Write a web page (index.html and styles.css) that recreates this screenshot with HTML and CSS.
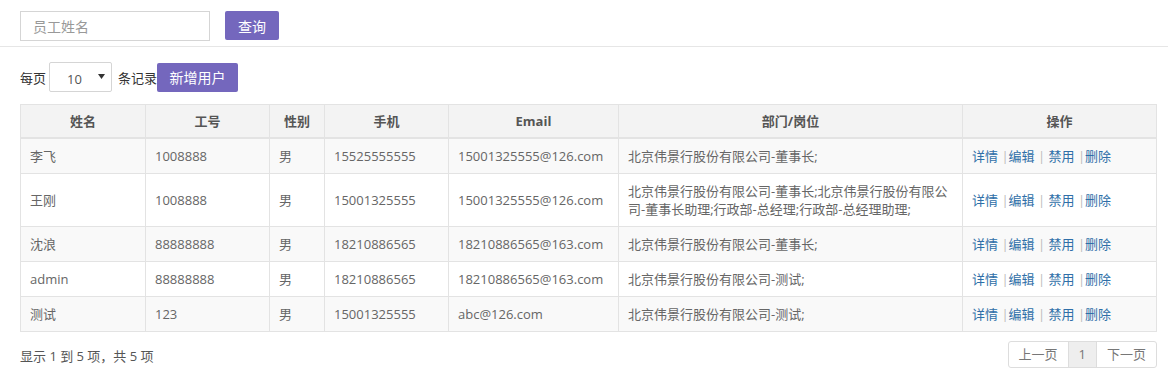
FILE: index.html
```html
<!DOCTYPE html>
<html lang="zh-CN">
<head>
    <meta charset="UTF-8">
    <title>员工管理</title>
    <link rel="stylesheet" href="styles.css">
</head>
<body>
    <!-- 查询栏 -->
    <div class="search-bar">
        <input type="text" class="search-input" placeholder="员工姓名">
        <button class="btn btn-purple">查询</button>
    </div>

    <div class="content">
        <!-- 工具栏 -->
        <div class="toolbar">
            <span>每页</span>
            <span class="select-wrap">
                <select class="page-size">
                    <option>10</option>
                    <option>25</option>
                    <option>50</option>
                </select>
                <svg class="select-arrow" width="7" height="5" viewBox="0 0 7 5"><path d="M0 0h7L3.5 5z" fill="#333"/></svg>
            </span>
            <span>条记录</span>
            <button class="btn btn-purple">新增用户</button>
        </div>

        <!-- 用户表格 -->
        <table class="user-table">
            <colgroup>
                <col style="width:125px"><col style="width:124px"><col style="width:55px">
                <col style="width:124px"><col style="width:170px"><col style="width:344px"><col>
            </colgroup>
            <thead>
                <tr>
                    <th>姓名</th><th>工号</th><th>性别</th><th>手机</th><th>Email</th><th>部门/岗位</th><th>操作</th>
                </tr>
            </thead>
            <tbody>
                <tr>
                    <td>李飞</td><td>1008888</td><td>男</td><td>15525555555</td><td>15001325555@126.com</td>
                    <td>北京伟景行股份有限公司-董事长;</td>
                    <td class="ops"><a href="#">详情</a> <span class="sep">|</span><a href="#">编辑</a> <span class="sep">|</span> <a href="#">禁用</a> <span class="sep">|</span><a href="#">删除</a></td>
                </tr>
                <tr>
                    <td>王刚</td><td>1008888</td><td>男</td><td>15001325555</td><td>15001325555@126.com</td>
                    <td>北京伟景行股份有限公司-董事长;北京伟景行股份有限公司-董事长助理;行政部-总经理;行政部-总经理助理;</td>
                    <td class="ops"><a href="#">详情</a> <span class="sep">|</span><a href="#">编辑</a> <span class="sep">|</span> <a href="#">禁用</a> <span class="sep">|</span><a href="#">删除</a></td>
                </tr>
                <tr>
                    <td>沈浪</td><td>88888888</td><td>男</td><td>18210886565</td><td>18210886565@163.com</td>
                    <td>北京伟景行股份有限公司-董事长;</td>
                    <td class="ops"><a href="#">详情</a> <span class="sep">|</span><a href="#">编辑</a> <span class="sep">|</span> <a href="#">禁用</a> <span class="sep">|</span><a href="#">删除</a></td>
                </tr>
                <tr>
                    <td>admin</td><td>88888888</td><td>男</td><td>18210886565</td><td>18210886565@163.com</td>
                    <td>北京伟景行股份有限公司-测试;</td>
                    <td class="ops"><a href="#">详情</a> <span class="sep">|</span><a href="#">编辑</a> <span class="sep">|</span> <a href="#">禁用</a> <span class="sep">|</span><a href="#">删除</a></td>
                </tr>
                <tr>
                    <td>测试</td><td>123</td><td>男</td><td>15001325555</td><td>abc@126.com</td>
                    <td>北京伟景行股份有限公司-测试;</td>
                    <td class="ops"><a href="#">详情</a> <span class="sep">|</span><a href="#">编辑</a> <span class="sep">|</span> <a href="#">禁用</a> <span class="sep">|</span><a href="#">删除</a></td>
                </tr>
            </tbody>
        </table>

        <!-- 分页 -->
        <div class="table-footer">
            <span class="info">显示 1 到 5 项，共 5 项</span>
            <div class="pagination">
                <a href="#">上一页</a>
                <a href="#" class="active">1</a>
                <a href="#">下一页</a>
            </div>
        </div>
    </div>
</body>
</html>
```

FILE: styles.css
```css
body {
    margin: 0;
    font-family: "Open Sans", "Noto Sans CJK SC", sans-serif;
    font-size: 13px;
    color: #333;
    background-color: #fff;
}
.search-bar {
    display: flex;
    align-items: center;
    padding: 11px 20px 5px;
    border-bottom: 1px solid #e6e6e6;
}
.search-input {
    width: 190px;
    height: 30px;
    box-sizing: border-box;
    border: 1px solid #d5d5d5;
    padding: 4px 12px;
    font-family: inherit;
    font-size: 14px;
    color: #555;
}
.search-input::placeholder {
    color: #999;
}
.btn {
    font-family: inherit;
    font-size: 14px;
    border: none;
    border-radius: 2px;
    cursor: pointer;
}
.btn-purple {
    background-color: #7467bd;
    color: #fff;
    height: 30px;
    padding: 0 12px;
}
.search-bar .btn {
    margin-left: 15px;
    width: 54px;
    height: 29px;
    margin-bottom: 1px;
}
.content {
    padding: 0 11px 0 20px;
}
.toolbar {
    display: flex;
    align-items: center;
    padding-top: 15px;
    color: #333;
}
.select-wrap {
    position: relative;
    display: inline-block;
    margin: 0 6px 0 3px;
}
.page-size {
    appearance: none;
    -webkit-appearance: none;
    width: 63px;
    height: 30px;
    border: 1px solid #d5d5d5;
    border-radius: 2px;
    background: #fff;
    padding: 4px 0 0 17px;
    font-family: inherit;
    font-size: 13px;
    color: #555;
}
.select-arrow {
    position: absolute;
    right: 7px;
    top: 12px;
    pointer-events: none;
}
.toolbar .btn {
    height: 29px;
    width: 81px;
    padding: 0;
    margin-left: 0;
}
.user-table {
    width: 1137px;
    margin-top: 12px;
    border-collapse: collapse;
    table-layout: fixed;
    border: 1px solid #dedede;
}
.user-table th,
.user-table td {
    border: 1px solid #e3e3e3;
    padding: 8px 9px;
    line-height: 18px;
    text-align: left;
    vertical-align: middle;
}
.user-table th {
    background-color: #f3f3f3;
    color: #555;
    font-weight: bold;
    text-align: center;
    padding: 7px 9px;
    border-bottom: 2px solid #e3e3e3;
}
.user-table td {
    color: #666;
}
.user-table tbody tr:nth-child(odd) {
    background-color: #f9f9f9;
}
.ops a {
    color: #2f6fa8;
    text-decoration: none;
}
.ops .sep {
    color: #bbb;
}
.table-footer {
    display: flex;
    justify-content: space-between;
    align-items: center;
    margin-top: 9px;
}
.info {
    color: #555;
    font-size: 13px;
    padding-top: 1px;
}
.pagination {
    display: flex;
    border: 1px solid #ddd;
    border-radius: 3px;
}
.pagination a {
    display: block;
    padding: 3px 10px 4px;
    font-size: 13px;
    color: #777;
    text-decoration: none;
    line-height: 18px;
}
.pagination a + a {
    border-left: 1px solid #ddd;
}
.pagination a.active {
    background-color: #eee;
    color: #777;
}
```
